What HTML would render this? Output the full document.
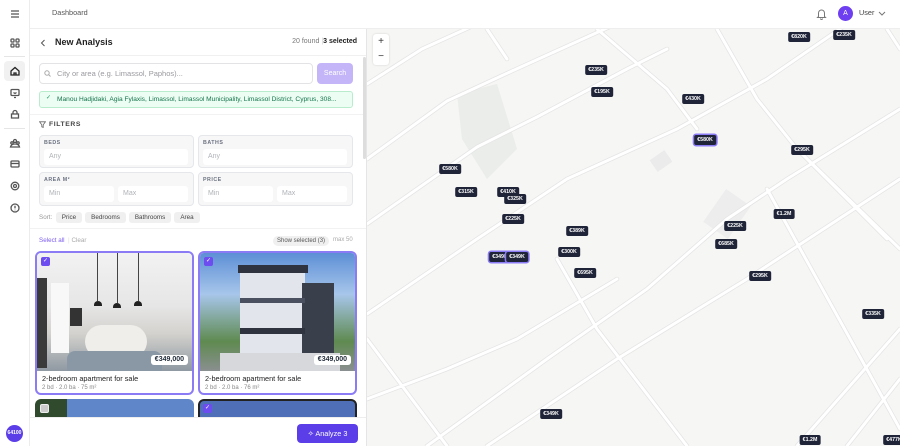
<!DOCTYPE html>
<html><head><meta charset="utf-8"><style>
*{box-sizing:border-box;margin:0;padding:0}
body{width:900px;height:446px;overflow:hidden;font-family:"Liberation Sans",sans-serif;background:#fff;position:relative;color:#1f2937;line-height:1.2}
.abs{position:absolute}
.side{left:0;top:0;width:30px;height:446px;border-right:1px solid #ececec;background:#fff}
.top{left:30px;top:0;width:870px;height:29px;border-bottom:1px solid #eee;background:#fff}
.panel{left:30px;top:29px;width:337px;height:417px;background:#fff;border-right:1px solid #e5e5e5;overflow:hidden}
.map{left:367px;top:29px;width:533px;height:417px;background:#f6f6f5;overflow:hidden}
.ic{position:absolute;left:9px;width:12px;height:12px;stroke:#555;fill:none;stroke-width:1.3}
.box{position:absolute;border:1px solid #e5e7eb;background:#f7f7f8;border-radius:4px}
.lab{position:absolute;font-size:5.3px;font-weight:bold;letter-spacing:.5px;color:#6b7280}
.inp{position:absolute;background:#fff;border-radius:3px;font-size:7px;color:#b0b3b8;padding-left:5px;line-height:16px;height:16px}
.chip{display:inline-block;background:#f0f0f1;border-radius:3px;font-size:6.3px;color:#444;padding:0 6px;height:11px;line-height:11px;margin-right:3px}
.pm{position:absolute;background:#1f2438;color:#fff;font-size:5.3px;font-weight:bold;padding:0 3px;height:10px;line-height:10px;border-radius:2px;transform:translate(-50%,-50%);white-space:nowrap}
.pm.h{box-shadow:0 0 0 1.5px #8b7cf6}
.card{position:absolute;border:2px solid #8b7cf6;border-radius:6px;overflow:hidden;background:#fff}
.cb{position:absolute;left:4px;top:4px;width:9px;height:9px;background:#6d4cf0;border-radius:2px;color:#fff;font-size:6px;line-height:9px;text-align:center}
.price{position:absolute;right:4px;bottom:3px;background:#fff;border-radius:3px;font-size:7px;font-weight:bold;padding:1px 4px}
</style></head><body>
<div class="abs side">
 <svg class="ic" style="top:8px" viewBox="0 0 12 12"><path d="M2 3h8M2 6h8M2 9h8"/></svg>
 <svg class="ic" style="top:37px" viewBox="0 0 12 12"><rect x="2" y="2" width="3" height="3" rx=".8"/><rect x="7" y="2" width="3" height="3" rx=".8"/><rect x="2" y="7" width="3" height="3" rx=".8"/><rect x="7" y="7" width="3" height="3" rx=".8"/></svg>
 <div class="abs" style="left:4px;top:56px;width:21px;height:1px;background:#e5e5e5"></div>
 <div class="abs" style="left:4px;top:61px;width:21px;height:20px;background:#f1f1f2;border-radius:4px"></div>
 <svg class="ic" style="top:65px;stroke:#222" viewBox="0 0 12 12"><path d="M2 6l4-3.5 4 3.5v4H2z M5 10V8h2v2"/></svg>
 <svg class="ic" style="top:87px" viewBox="0 0 12 12"><rect x="2" y="2.5" width="8" height="6" rx="1"/><path d="M5 10.5h2M4.5 5.5l1.5 1 1.5-1"/></svg>
 <svg class="ic" style="top:108px" viewBox="0 0 12 12"><path d="M2.5 6h7v4h-7zM4 6V4.5a2 2 0 014 0V6"/></svg>
 <div class="abs" style="left:4px;top:128px;width:21px;height:1px;background:#e5e5e5"></div>
 <svg class="ic" style="top:137px" viewBox="0 0 12 12"><circle cx="6" cy="4" r="1.5"/><circle cx="3" cy="6" r="1.2"/><circle cx="9" cy="6" r="1.2"/><path d="M1.5 10c.5-2 2-3 4.5-3s4 1 4.5 3z"/></svg>
 <svg class="ic" style="top:158px" viewBox="0 0 12 12"><rect x="2" y="3" width="8" height="6" rx="1"/><path d="M2 5.5h8"/></svg>
 <svg class="ic" style="top:180px" viewBox="0 0 12 12"><circle cx="6" cy="6" r="1.5"/><circle cx="6" cy="6" r="3.8"/></svg>
 <svg class="ic" style="top:202px" viewBox="0 0 12 12"><circle cx="6" cy="6" r="4"/><path d="M6 3.8v2.6M6 7.8v.4"/></svg>
 <div class="abs" style="left:6px;top:425px;width:17px;height:17px;border-radius:50%;background:#5b3ee8;color:#fff;font-size:5px;font-weight:bold;line-height:17px;text-align:center">64100</div>
</div>
<div class="abs top">
 <div class="abs" style="left:22px;top:9px;font-size:7.3px;color:#555">Dashboard</div>
 <svg class="abs" style="left:786px;top:8px" width="11" height="12" viewBox="0 0 11 12" fill="none" stroke="#777" stroke-width="1"><path d="M2.5 8.5V5a3 3 0 016 0v3.5l1 1h-8z M4.5 10.5a1 1 0 002 0"/></svg>
 <div class="abs" style="left:808px;top:6px;width:15px;height:15px;border-radius:50%;background:#6d3ff0;color:#fff;font-size:7px;line-height:15px;text-align:center">A</div>
 <div class="abs" style="left:829px;top:9px;font-size:7.3px;color:#444">User</div>
 <svg class="abs" style="left:848px;top:11px" width="8" height="5" viewBox="0 0 8 5" fill="none" stroke="#777"><path d="M1 1l3 3 3-3"/></svg>
</div>
<div class="abs panel">
 <svg class="abs" style="left:10px;top:10px" width="6" height="8" viewBox="0 0 6 8" fill="none" stroke="#555"><path d="M4.5 1l-3 3 3 3"/></svg>
 <div class="abs" style="left:25px;top:8px;font-size:9px;font-weight:bold;color:#222">New Analysis</div>
 <div class="abs" style="right:9px;top:9px;font-size:7px;color:#777">20 found <span style="color:#ccc">|</span><b style="color:#222">3 selected</b></div>
 <div class="abs" style="left:0;top:26px;width:337px;height:1px;background:#f0f0f0"></div>
 <div class="abs" style="left:9px;top:34px;width:274px;height:21px;border:1px solid #e3e3e6;border-radius:4px;font-size:7.5px;color:#9a9aa0;line-height:19px;padding-left:17px">City or area (e.g. Limassol, Paphos)...</div>
 <svg class="abs" style="left:14px;top:41px" width="7" height="7" viewBox="0 0 7 7" fill="none" stroke="#aaa"><circle cx="3" cy="3" r="2.2"/><path d="M4.7 4.7L6.5 6.5"/></svg>
 <div class="abs" style="left:287px;top:34px;width:36px;height:21px;background:#c4b5f8;border-radius:4px;color:#fff;font-size:7px;line-height:21px;text-align:center">Search</div>
 <div class="abs" style="left:9px;top:62px;width:314px;height:17px;background:#ecfdf3;border:1px solid #b9eccd;border-radius:3px;font-size:6.6px;color:#14734a;line-height:15px;padding-left:17px;white-space:nowrap;overflow:hidden">Manou Hadjidaki, Agia Fylaxis, Limassol, Limassol Municipality, Limassol District, Cyprus, 308...</div>
 <div class="abs" style="left:16px;top:66px;font-size:6px;color:#1c9e5f">✓</div>
 <div class="abs" style="left:0;top:85px;width:337px;height:1px;background:#f2f2f2"></div>
 <svg class="abs" style="left:9px;top:92px" width="7" height="7" viewBox="0 0 7 7" fill="none" stroke="#666" stroke-width=".8"><path d="M.5 .8h6L4.2 3.8v2.6L2.8 5.8V3.8z"/></svg>
 <div class="abs" style="left:19px;top:92px;font-size:6.8px;font-weight:bold;letter-spacing:.6px;color:#444">FILTERS</div>
 <div class="box" style="left:9px;top:106px;width:155px;height:33px"></div><div class="lab" style="left:14px;top:111px">BEDS</div><div class="inp" style="left:14px;top:120px;width:144px">Any</div>
 <div class="box" style="left:168px;top:106px;width:155px;height:33px"></div><div class="lab" style="left:173px;top:111px">BATHS</div><div class="inp" style="left:173px;top:120px;width:144px">Any</div>
 <div class="box" style="left:9px;top:143px;width:155px;height:34px"></div><div class="lab" style="left:14px;top:148px">AREA M²</div><div class="inp" style="left:14px;top:157px;width:70px">Min</div><div class="inp" style="left:88px;top:157px;width:70px">Max</div>
 <div class="box" style="left:168px;top:143px;width:155px;height:34px"></div><div class="lab" style="left:173px;top:148px">PRICE</div><div class="inp" style="left:173px;top:157px;width:70px">Min</div><div class="inp" style="left:247px;top:157px;width:70px">Max</div>
 <div class="abs" style="left:9px;top:183px;font-size:6.3px;color:#999;white-space:nowrap">Sort: &nbsp;<span class="chip">Price</span><span class="chip">Bedrooms</span><span class="chip">Bathrooms</span><span class="chip">Area</span></div>
 <div class="abs" style="left:0;top:199px;width:337px;height:1px;background:#f2f2f2"></div>
 <div class="abs" style="left:9px;top:208px;font-size:6.3px;color:#7c5cf0">Select all <span style="color:#ddd">&nbsp;|&nbsp;</span><span style="color:#aaa">Clear</span></div>
 <div class="abs" style="left:243px;top:207px;background:#f0f0f1;border-radius:5px;font-size:6px;color:#555;padding:0 4px;height:10px;line-height:10px">Show selected (3)</div>
 <div class="abs" style="left:303px;top:208px;font-size:6px;color:#aaa">max 50</div>
 <div class="card" style="left:5px;top:222px;width:159px;height:144px">
  <div class="abs" style="left:0;top:0;width:155px;height:118px;background:linear-gradient(180deg,#f2f2f2 0%,#e6e6e6 45%,#d4d2ce 68%,#8f99a2 100%)">
   <div class="abs" style="left:0;top:25px;width:10px;height:90px;background:#3a3a3a"></div>
   <div class="abs" style="left:14px;top:30px;width:18px;height:70px;background:#f8f8f8"></div>
   <div class="abs" style="left:33px;top:55px;width:12px;height:18px;background:#333"></div>
   <div class="abs" style="left:48px;top:72px;width:62px;height:33px;border-radius:20px;background:#efeeea"></div>
   <div class="abs" style="left:57px;top:48px;width:8px;height:5px;background:#222;border-radius:4px 4px 0 0"></div>
   <div class="abs" style="left:76px;top:50px;width:8px;height:5px;background:#222;border-radius:4px 4px 0 0"></div>
   <div class="abs" style="left:97px;top:48px;width:8px;height:5px;background:#222;border-radius:4px 4px 0 0"></div>
   <div class="abs" style="left:60px;top:0;width:1px;height:48px;background:#444"></div>
   <div class="abs" style="left:80px;top:0;width:1px;height:50px;background:#444"></div>
   <div class="abs" style="left:101px;top:0;width:1px;height:48px;background:#444"></div>
   <div class="abs" style="left:30px;top:98px;width:95px;height:20px;background:#8a98a6;border-radius:8px 8px 0 0"></div>
  </div>
  <div class="cb">✓</div>
  <div class="price" style="bottom:28px">€349,000</div>
  <div class="abs" style="left:5px;top:122px;font-size:7.3px;color:#222">2-bedroom apartment for sale</div>
  <div class="abs" style="left:5px;top:132px;font-size:6px;color:#888">2 bd · 2.0 ba · 75 m²</div>
 </div>
 <div class="card" style="left:168px;top:222px;width:159px;height:144px">
  <div class="abs" style="left:0;top:0;width:155px;height:118px;background:linear-gradient(180deg,#5d8fd6 0%,#a7c6ea 35%,#5f8a50 75%,#8a8f90 100%)">
   <div class="abs" style="left:40px;top:18px;width:65px;height:87px;background:#e2e5ec"></div>
   <div class="abs" style="left:38px;top:12px;width:70px;height:8px;background:#2f3340"></div>
   <div class="abs" style="left:102px;top:30px;width:32px;height:76px;background:#3a3f4c"></div>
   <div class="abs" style="left:40px;top:45px;width:65px;height:5px;background:#4a5060"></div>
   <div class="abs" style="left:40px;top:75px;width:65px;height:6px;background:#2f3340"></div>
   <div class="abs" style="left:20px;top:100px;width:120px;height:18px;background:#d6d8dc"></div>
  </div>
  <div class="cb">✓</div>
  <div class="price" style="bottom:28px">€349,000</div>
  <div class="abs" style="left:5px;top:122px;font-size:7.3px;color:#222">2-bedroom apartment for sale</div>
  <div class="abs" style="left:5px;top:132px;font-size:6px;color:#888">2 bd · 2.0 ba · 76 m²</div>
 </div>
 <div class="abs" style="left:5px;top:370px;width:159px;height:20px;border-radius:6px 6px 0 0;background:linear-gradient(90deg,#2f4a2c 0 20%,#5f86c8 20%)"></div>
 <div class="abs" style="left:10px;top:375px;width:9px;height:9px;background:#ccc;border-radius:2px;border:1px solid #eee"></div>
 <div class="abs" style="left:168px;top:370px;width:159px;height:20px;border-radius:6px 6px 0 0;background:#4f6fb8;border:2px solid #222"></div>
 <div class="cb" style="left:173px;top:375px">✓</div>
 <div class="abs" style="left:0;top:388px;width:337px;height:29px;background:#fff;border-top:1px solid #eee"></div>
 <div class="abs" style="left:267px;top:395px;width:61px;height:19px;background:#5b3ee8;border-radius:4px;color:#fff;font-size:7.3px;line-height:19px;text-align:center">✧ Analyze 3</div>
 <div class="abs" style="left:333px;top:28px;width:3px;height:102px;background:#ddd;border-radius:2px"></div>
</div>
<div class="abs map">
 <svg width="533" height="417" style="position:absolute;left:0;top:0">
  <path d="M90 65L130 55L150 120L120 150L95 110Z" fill="#eaede9"/>
  <rect x="285" y="125" width="18" height="14" fill="#ebebeb" transform="rotate(-35 294 132)"/>
  <rect x="345" y="165" width="30" height="40" fill="#ededed" transform="rotate(35 360 185)"/>
  <g fill="none" stroke-linecap="round">
   <g stroke="#e4e4e4" stroke-width="4.5">
    <path d="M0 55L55 20L110 -5M0 130L80 72L145 42L260 -10M0 195L110 118L170 88L260 40L300 20M0 285L110 210L200 150L310 100L400 50L480 -5M60 417L180 330L280 260L360 190L420 150L533 80M120 417L250 330L380 250L533 150M230 0L300 60L330 100M350 0L390 70L430 120L533 220M430 120L520 210M120 0L140 30M0 370L80 340L150 310L250 250M80 417L0 310M320 417L230 300L190 230M480 417L533 350M430 417L533 300M400 160L533 400M520 0L533 20"/>
   </g>
   <g stroke="#ffffff" stroke-width="3">
    <path d="M0 55L55 20L110 -5M0 130L80 72L145 42L260 -10M0 195L110 118L170 88L260 40L300 20M0 285L110 210L200 150L310 100L400 50L480 -5M60 417L180 330L280 260L360 190L420 150L533 80M120 417L250 330L380 250L533 150M230 0L300 60L330 100M350 0L390 70L430 120L533 220M430 120L520 210M120 0L140 30M0 370L80 340L150 310L250 250M80 417L0 310M320 417L230 300L190 230M480 417L533 350M430 417L533 300M400 160L533 400M520 0L533 20"/>
   </g>
  </g>
 </svg>
 <div class="abs" style="left:6px;top:5px;width:16px;height:31px;background:#fff;border-radius:3px;box-shadow:0 0 2px rgba(0,0,0,.15);font-size:10px;text-align:center;line-height:15px;color:#333">+<br>−</div>
</div>
<div class="pm" style="left:799px;top:37px">€820K</div>
<div class="pm" style="left:844px;top:35px">€235K</div>
<div class="pm" style="left:596px;top:70px">€235K</div>
<div class="pm" style="left:602px;top:92px">€195K</div>
<div class="pm" style="left:693px;top:99px">€430K</div>
<div class="pm h" style="left:705px;top:140px">€580K</div>
<div class="pm" style="left:802px;top:150px">€295K</div>
<div class="pm" style="left:450px;top:169px">€580K</div>
<div class="pm" style="left:466px;top:192px">€315K</div>
<div class="pm" style="left:508px;top:192px">€410K</div>
<div class="pm" style="left:515px;top:199px">€325K</div>
<div class="pm" style="left:513px;top:219px">€225K</div>
<div class="pm" style="left:577px;top:231px">€389K</div>
<div class="pm" style="left:784px;top:214px">€1.2M</div>
<div class="pm" style="left:735px;top:226px">€225K</div>
<div class="pm" style="left:726px;top:244px">€685K</div>
<div class="pm" style="left:569px;top:252px">€300K</div>
<div class="pm h" style="left:500px;top:257px">€349K</div>
<div class="pm h" style="left:517px;top:257px">€349K</div>
<div class="pm" style="left:585px;top:273px">€695K</div>
<div class="pm" style="left:760px;top:276px">€295K</div>
<div class="pm" style="left:873px;top:314px">€335K</div>
<div class="pm" style="left:551px;top:414px">€349K</div>
<div class="pm" style="left:810px;top:440px">€1.2M</div>
<div class="pm" style="left:894px;top:440px">€477K</div>
</body></html>
